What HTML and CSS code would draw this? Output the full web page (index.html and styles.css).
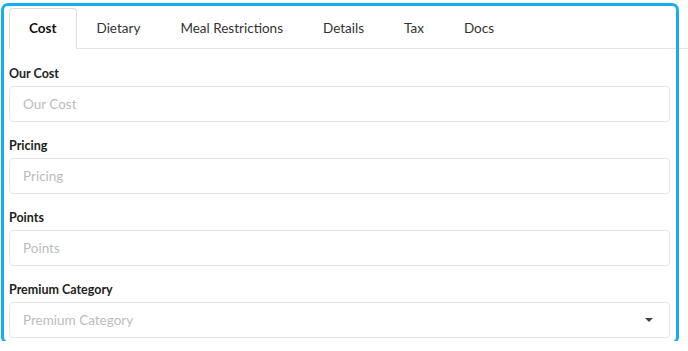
FILE: index.html
```html
<!DOCTYPE html>
<html>
<head>
  <meta charset="UTF-8">
  <title>Item Cost</title>
  <link rel="stylesheet" href="styles.css">
</head>
<body>
  <div class="panel">
    <ul class="tabs">
      <li class="tab active">Cost</li>
      <li class="tab">Dietary</li>
      <li class="tab">Meal Restrictions</li>
      <li class="tab">Details</li>
      <li class="tab">Tax</li>
      <li class="tab">Docs</li>
    </ul>

    <div class="form-group">
      <label for="ourCost">Our Cost</label>
      <input type="text" id="ourCost" placeholder="Our Cost">
    </div>

    <div class="form-group">
      <label for="pricing">Pricing</label>
      <input type="text" id="pricing" placeholder="Pricing">
    </div>

    <div class="form-group">
      <label for="points">Points</label>
      <input type="text" id="points" placeholder="Points">
    </div>

    <div class="form-group">
      <label for="premiumCategory">Premium Category</label>
      <div class="select" id="premiumCategory">
        <span class="placeholder">Premium Category</span>
        <svg class="caret" width="8" height="4" viewBox="0 0 8 4"><path d="M0 0h8L4 4z" fill="#444"/></svg>
      </div>
    </div>
  </div>
</body>
</html>
```

FILE: styles.css
```css
body {
  margin: 0;
  padding: 6px 0 0 4px;
  font-family: Lato, "Open Sans", sans-serif;
  background-color: #fff;
  color: #222;
}
.panel {
  width: 661px;
  padding: 2px 6px 3px 5px;
  outline: 3px solid #15adf0;
  border-radius: 4px;
}
.tabs {
  display: flex;
  list-style: none;
  margin: 0 -18px 0 0;
  padding: 0;
  border-bottom: 1px solid #e4e4e4;
}
.tab {
  height: 39px;
  line-height: 39px;
  padding: 0 19px;
  border: 1px solid transparent;
  border-bottom: none;
  font-size: 13.5px;
  color: #333;
  margin-bottom: -1px;
  background-color: #fff;
}
.tab.active {
  border-color: #dcdcdc;
  border-radius: 4px 4px 0 0;
  font-weight: bold;
  color: #111;
  height: 40px;
}
.form-group {
  margin-top: 17px;
}
.form-group + .form-group {
  margin-top: 16px;
}
label {
  display: block;
  font-size: 12.5px;
  line-height: 16px;
  font-weight: bold;
  color: #222;
  margin-bottom: 4px;
}
input,
.select {
  display: block;
  width: 100%;
  height: 36px;
  box-sizing: border-box;
  padding: 0 13px;
  border: 1px solid #e6e6e6;
  border-radius: 4px;
  font-family: inherit;
  font-size: 13.5px;
  color: #333;
}
input::placeholder {
  color: #bcbcbc;
}
.select {
  display: flex;
  align-items: center;
  justify-content: space-between;
}
.placeholder {
  color: #bcbcbc;
}
.caret {
  margin-right: 3px;
}
```
